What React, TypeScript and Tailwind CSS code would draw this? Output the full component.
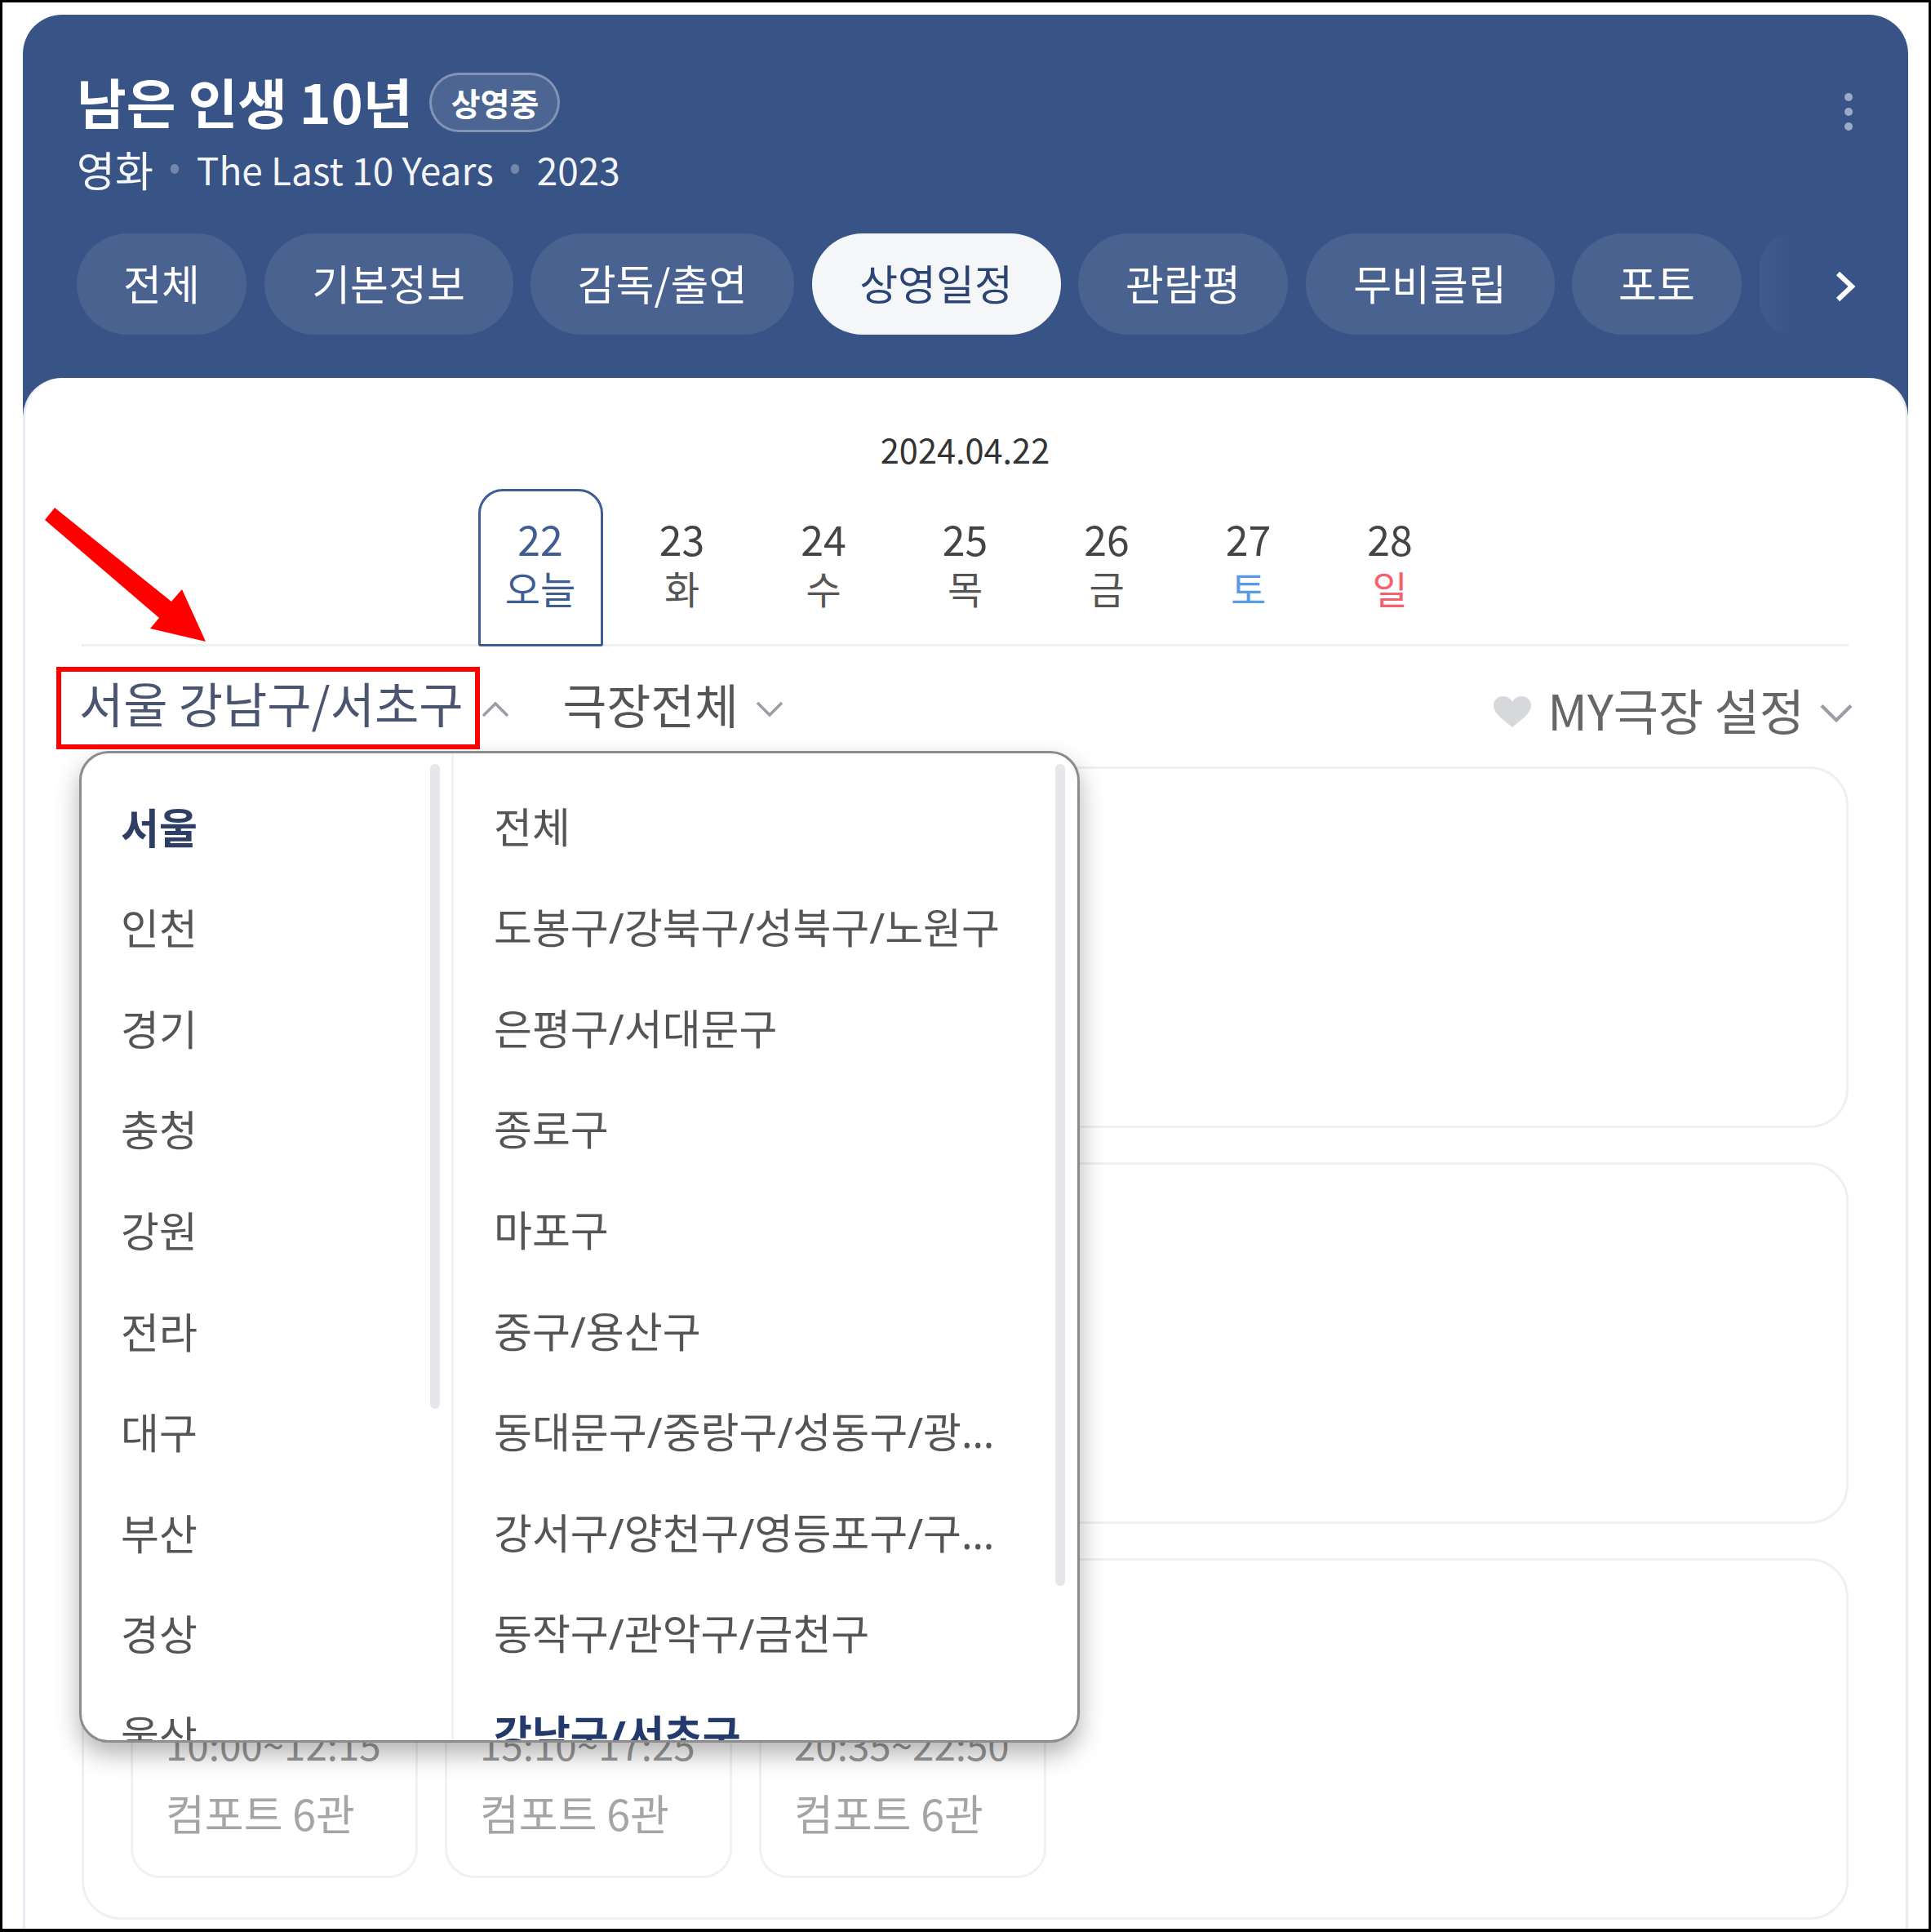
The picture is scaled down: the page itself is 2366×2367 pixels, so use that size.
const tabs = [
  { t: '전체', w: 'w-[208px]' },
  { t: '기본정보', w: 'w-[305px]' },
  { t: '감독/출연', w: 'w-[323px]' },
  { t: '상영일정', w: 'w-[305px]', active: true },
  { t: '관람평', w: 'w-[257px]' },
  { t: '무비클립', w: 'w-[305px]' },
  { t: '포토', w: 'w-[208px]' },
];

const days = [
  { n: '22', l: '오늘', active: true },
  { n: '23', l: '화' },
  { n: '24', l: '수' },
  { n: '25', l: '목' },
  { n: '26', l: '금' },
  { n: '27', l: '토', c: 'text-[#5a9be8]' },
  { n: '28', l: '일', c: 'text-[#f4606c]' },
];

const regions = ['서울', '인천', '경기', '충청', '강원', '전라', '대구', '부산', '경상', '울산'];
const districts = [
  '전체',
  '도봉구/강북구/성북구/노원구',
  '은평구/서대문구',
  '종로구',
  '마포구',
  '중구/용산구',
  '동대문구/중랑구/성동구/광진구',
  '강서구/양천구/영등포구/구로구',
  '동작구/관악구/금천구',
  '강남구/서초구',
];
const shows = ['10:00~12:15', '15:10~17:25', '20:35~22:50'];

function Chevron({ up, className }: { up?: boolean; className: string }) {
  return (
    <svg viewBox="0 0 34 20" className={className} fill="none" stroke="#9a9da3" strokeWidth="3.5">
      <polyline points={up ? '2,18 17,3 32,18' : '2,2 17,17 32,2'} />
    </svg>
  );
}

export default function App() {
  return (
    <div className="relative w-[2366px] h-[2367px] overflow-hidden bg-white border-[3px] border-b-[4px] border-black px-[25px] pt-[15px] flex flex-col font-['Noto_Sans_CJK_KR','Noto_Sans',sans-serif] text-[#555]">
      {/* header */}
      <div className="h-[493px] shrink-0 rounded-t-[48px] bg-[#385486] pl-[66px] pt-[71px] text-white">
        <div className="flex items-center h-[73px]">
          <span className="text-[66px] leading-[73px] font-bold pb-[4px]">남은 인생 10년</span>
          <span className="ml-[21px] w-[160px] h-[73px] rounded-full border-[3px] border-white/30 bg-white/10 flex items-center justify-center text-[39px] font-bold leading-none">
            상영중
          </span>
          <svg viewBox="0 0 12 46" className="ml-auto mr-[67px] mt-[22px] w-[12px] h-[46px]" fill="#ffffff" fillOpacity="0.5">
            <ellipse cx="6" cy="5" rx="5" ry="5" />
            <ellipse cx="6" cy="23" rx="5" ry="5" />
            <ellipse cx="6" cy="41" rx="5" ry="5" />
          </svg>
        </div>
        <div className="mt-[15px] h-[60px] flex items-center leading-[60px] text-white/95">
          <span className="text-[51px]">영화</span>
          <span className="mx-[21.5px] w-[10px] h-[12px] rounded-full bg-white/30" />
          <span className="text-[46px]">The Last 10 Years</span>
          <span className="mx-[21.5px] w-[10px] h-[12px] rounded-full bg-white/30" />
          <span className="text-[46px]">2023</span>
        </div>
        <div className="mt-[49px] flex items-center gap-[21.5px] h-[124px]">
          {tabs.map((t) => (
            <div
              key={t.t}
              className={`${t.w} h-[124px] shrink-0 rounded-full flex items-center justify-center text-[51px] leading-none pb-[4px] ${
                t.active ? 'bg-[#f5f6f8] text-[#2c4474]' : 'bg-[#4a6290] text-white'
              }`}
            >
              {t.t}
            </div>
          ))}
          <div className="w-[41px] h-[124px] shrink-0 rounded-l-full bg-gradient-to-r from-[#415a8b] to-[#385486]" />
          <svg viewBox="0 0 26 38" className="ml-[30px] mt-[5px] w-[26px] h-[38px]" fill="none" stroke="#ffffff" strokeWidth="6">
            <polyline points="4,3 21,19 4,35" />
          </svg>
        </div>
      </div>

      {/* panel */}
      <div className="relative -mt-[48px] flex-1 rounded-t-[48px] bg-white border-x-[3px] border-[#e8ebf2] pl-[69px] pr-[70px] pt-[62px]">
        <div className="h-[50px] text-center text-[41.5px] leading-[50px] text-[#333]">2024.04.22</div>
        <div className="mt-[24px] h-[193px] border-b-[3px] border-[#eef0f3] flex justify-center gap-[20.5px]">
          {days.map((d) => (
            <div
              key={d.n}
              className={`w-[153px] h-[193px] shrink-0 flex flex-col items-center ${
                d.active ? 'border-[3px] pt-[27px] border-[#3f5d92] rounded-t-[30px] rounded-b-[3px] text-[#3f5d92]' : 'pt-[30px]'
              }`}
            >
              <span className={`text-[50px] leading-[60px] ${d.active ? 'text-[#3f5d92]' : 'text-[#444]'}`}>{d.n}</span>
              <span className={`text-[47px] leading-[60px] mt-[1px] ${d.c ?? (d.active ? 'text-[#3f5d92]' : 'text-[#555]')}`}>{d.l}</span>
            </div>
          ))}
        </div>

        <div className="mt-[24px] h-[100px] flex items-center">
          <span className="-ml-[3px] text-[59px] leading-[70px] text-[#4a5570] -mt-[10px]">서울 강남구/서초구</span>
          <Chevron up className="ml-[22px] w-[34px] h-[20px] mt-[6px] shrink-0" />
          <span className="ml-[66px] text-[58.5px] leading-[70px] text-[#555] -mt-[8px]">극장전체</span>
          <Chevron className="ml-[20px] w-[36px] h-[20px] mt-[6px] shrink-0" />
          <svg viewBox="0 0 46 38" className="ml-auto w-[46px] h-[38px] mt-[12px] shrink-0" fill="#d6d8dc">
            <path d="M23 38 C14 30 0 22 0 11 C0 4 6 0 12 0 C17 0 21 3 23 7 C25 3 29 0 34 0 C40 0 46 4 46 11 C46 22 32 30 23 38 Z" />
          </svg>
          <span className="ml-[20px] text-[60px] leading-[70px] text-[#666] mt-[6px]">MY극장 설정</span>
          <Chevron className="ml-[18px] -mr-[6px] w-[42px] h-[24px] mt-[16px] shrink-0" />
        </div>

        <div className="mt-[23px] flex flex-col gap-[42px]">
          <div className="h-[443px] rounded-[48px] border-[3px] border-[#eef0f3]" />
          <div className="h-[443px] rounded-[48px] border-[3px] border-[#eef0f3]" />
          <div className="h-[443px] rounded-[48px] border-[3px] border-[#eef0f3] flex items-end gap-[33px] pl-[57px] pb-[48px]">
            {shows.map((s) => (
              <div key={s} className="w-[352px] h-[260px] shrink-0 rounded-[36px] border-[3px] border-[#f0f1f4] flex flex-col justify-end pl-[40px] pb-[47px]">
                <span className="text-[47.5px] leading-[60px] text-[#999]">{s}</span>
                <span className="mt-[24px] text-[52px] leading-[60px] text-[#a5a5a5]">컴포트 6관</span>
              </div>
            ))}
          </div>
        </div>
      </div>

      {/* dropdown */}
      <div className="absolute left-[94px] top-[917px] w-[1226px] h-[1215px] rounded-[36px] border-[3px] border-[#8c8c8c] bg-white overflow-hidden shadow-[0_14px_30px_rgba(0,0,0,0.3)] flex">
        <div className="relative w-[453px] shrink-0 pl-[48px] pt-[27px] text-[51px] text-[#555]">
          {regions.map((r, i) => (
            <div key={r} className={`h-[123.6px] flex items-center ${i === 0 ? 'font-bold text-[#2f3f63]' : ''}`}>
              {r}
            </div>
          ))}
          <div className="absolute left-[427px] top-[13px] w-[12px] h-[790px] rounded-full bg-[#e6e7eb]" />
        </div>
        <div className="relative flex-1 border-l-[3px] border-[#f1f2f4] pl-[49px] pt-[28px] text-[51px] text-[#555] font-['Noto_Sans','Noto_Sans_CJK_KR',sans-serif]">
          {districts.map((d, i) => (
            <div key={d} className={`h-[123.6px] flex items-center w-[625px] ${i === 9 ? 'font-bold text-[#24396c]' : ''}`}>
              <span className="truncate">{d}</span>
            </div>
          ))}
          <div className="absolute left-[737px] top-[13px] w-[12px] h-[1007px] rounded-full bg-[#e6e7eb]" />
        </div>
      </div>

      {/* annotations */}
      <div className="absolute left-[66px] top-[814px] w-[519px] h-[101px] border-[6px] border-[#ff0000]" />
      <svg className="absolute left-[49px] top-[616px] w-[200px] h-[170px]" viewBox="52 619 200 170" fill="#ff0000">
        <polygon points="67,622 55,637 195,757 184,770 252,786 223,722 210,737" />
      </svg>
    </div>
  );
}
